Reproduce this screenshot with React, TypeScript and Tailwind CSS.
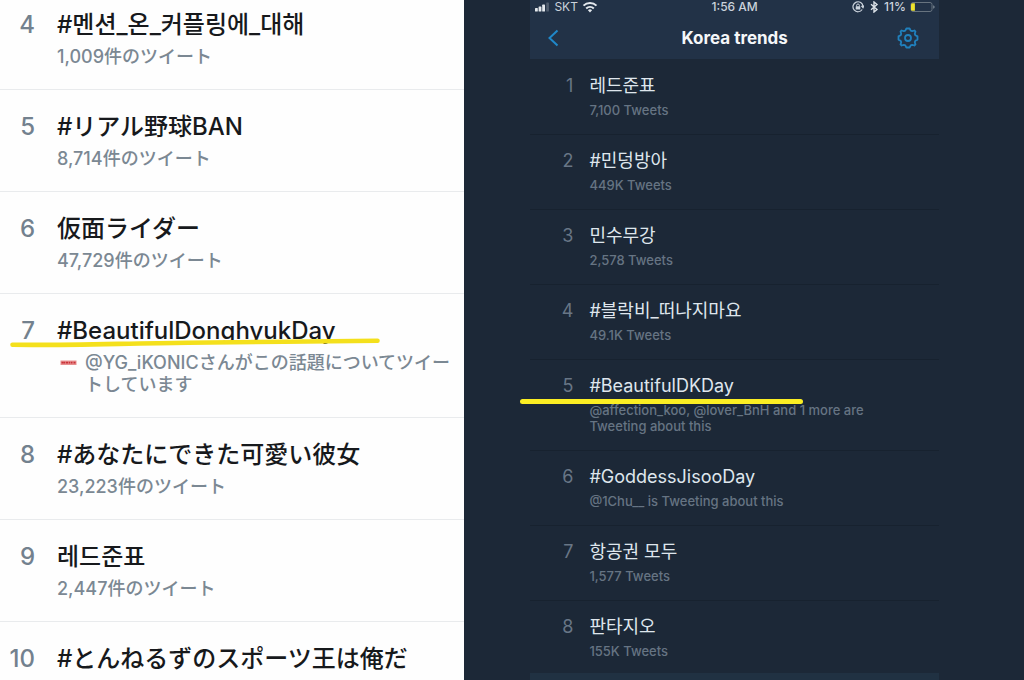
import type { ReactNode } from 'react';

type Trend = { rank: number; name: string; detail?: string; badge?: boolean; mark?: ReactNode };

const japanTrends: Trend[] = [
  { rank: 4, name: '#멘션_온_커플링에_대해', detail: '1,009件のツイート' },
  { rank: 5, name: '#リアル野球BAN', detail: '8,714件のツイート' },
  { rank: 6, name: '仮面ライダー', detail: '47,729件のツイート' },
  {
    rank: 7,
    name: '#BeautifulDonghyukDay',
    detail: '@YG_iKONICさんがこの話題についてツイートしています',
    badge: true,
    mark: (
      <svg className="absolute top-[43px] left-2 h-3 w-[374px]" viewBox="0 0 374 12" fill="none" aria-hidden="true">
        <path d="M4.500 7.800C60 8.500 110 6.500 180 5.700C250 5 300 4.500 369.500 3.700" stroke="#f4e01c" strokeWidth="4.600" strokeLinecap="round" />
      </svg>
    ),
  },
  { rank: 8, name: '#あなたにできた可愛い彼女', detail: '23,223件のツイート' },
  { rank: 9, name: '레드준표', detail: '2,447件のツイート' },
  { rank: 10, name: '#とんねるずのスポーツ王は俺だ' },
];

const koreaTrends: Trend[] = [
  { rank: 1, name: '레드준표', detail: '7,100 Tweets' },
  { rank: 2, name: '#민덩방아', detail: '449K Tweets' },
  { rank: 3, name: '민수무강', detail: '2,578 Tweets' },
  { rank: 4, name: '#블락비_떠나지마요', detail: '49.1K Tweets' },
  {
    rank: 5,
    name: '#BeautifulDKDay',
    detail: '@affection_koo, @lover_BnH and 1 more are Tweeting about this',
    mark: <span className="absolute top-[39px] -left-2.5 h-[5px] w-[283px] rounded-full bg-[#fbee23]" />,
  },
  { rank: 6, name: '#GoddessJisooDay', detail: '@1Chu__ is Tweeting about this' },
  { rank: 7, name: '항공권 모두', detail: '1,577 Tweets' },
  { rank: 8, name: '판타지오', detail: '155K Tweets' },
];

function JapanRow({ trend }: { trend: Trend }) {
  return (
    <li className="relative flex border-b border-[#e9ebed] pt-[21px] pb-[21px] first:pt-[9px] last:border-b-0 last:pb-0">
      <span className="w-[35px] shrink-0 text-right text-2xl leading-8 font-medium text-[#73818e]">{trend.rank}</span>
      <div className="ml-[22px] min-w-0 flex-1 pr-2">
        <h2 className="text-2xl leading-8 font-medium whitespace-nowrap text-[#17191c]">{trend.name}</h2>
        {trend.detail && (
          <div className="flex pt-[5px] text-lg leading-[22px] font-medium text-[#7b8893]">
            {trend.badge && (
              <svg className="mt-2 mr-2 ml-[3px] h-1.5 w-[17px] shrink-0" viewBox="0 0 16 6" aria-hidden="true">
                <rect y="0.500" width="16" height="4.500" fill="#e79090" />
                <path d="M1 2.700h2M4 1.800v1.800M5.500 2.700h2M9 1.800v1.800M10.500 2.700h1.500M13 2.700h2" stroke="#c93239" strokeWidth="1.700" />
              </svg>
            )}
            <p>{trend.detail}</p>
          </div>
        )}
      </div>
      {trend.mark}
    </li>
  );
}

function KoreaRow({ trend }: { trend: Trend }) {
  return (
    <li className="relative flex border-b border-[#17222f] pt-3.5 pb-4 last:border-b-0 last:pb-3.5">
      <span className="w-[43px] shrink-0 text-right text-lg leading-6 text-[#687686]">{trend.rank}</span>
      <div className="ml-4 min-w-0 flex-1 pr-14">
        <h2 className="text-lg leading-6 text-[#dfe6ed]">{trend.name}</h2>
        <p className="pt-1 text-[13px] leading-4 font-medium text-[#667483]">{trend.detail}</p>
      </div>
      {trend.mark}
    </li>
  );
}

function StatusBar() {
  return (
    <div className="grid h-[14px] grid-cols-3 items-center px-1 text-[12px] leading-[14px] text-[#cbd3dc]">
      <div className="flex items-center gap-1">
        <svg className="h-2.5 w-4" viewBox="0 0 16 10" fill="#e3e8ed" aria-hidden="true">
          <rect x="1" y="6" width="2.800" height="3.500" rx=".6" />
          <rect x="4.600" y="4.500" width="2.800" height="5" rx=".6" />
          <rect x="8.200" y="2.600" width="2.800" height="6.900" rx=".6" />
          <rect x="12.300" y="0.500" width="2.600" height="9" rx=".6" opacity=".25" />
        </svg>
        <span>SKT</span>
        <svg className="h-3 w-4" viewBox="0 0 16 12" fill="none" stroke="#e3e8ed" strokeWidth="2" aria-hidden="true">
          <path d="M1.500 4.600a9.300 9.300 0 0 1 13 0M4.200 7.500a5.500 5.500 0 0 1 7.600 0" />
          <path d="M8 11.500L5.900 9.300a3 3 0 0 1 4.200 0Z" fill="#e3e8ed" stroke="none" />
        </svg>
      </div>
      <span className="text-center font-medium">1:56 AM</span>
      <div className="flex items-center justify-end gap-1">
        <svg className="h-3 w-3" viewBox="0 0 12 12" fill="none" stroke="#cbd3dc" strokeWidth="1.200" aria-hidden="true">
          <path d="M10.200 8.500A5 5 0 1 1 11 5.500M9.400 4.800L11 6.600l1-2" />
          <rect x="3.700" y="5.300" width="4.600" height="3.300" rx=".5" fill="#cbd3dc" stroke="none" />
          <path d="M4.600 5.500V4.400a1.400 1.400 0 0 1 2.800 0v1.100" strokeWidth="1" />
        </svg>
        <svg className="h-3 w-3" viewBox="0 0 12 12" fill="none" stroke="#dce2e8" strokeWidth="1.400" aria-hidden="true">
          <path d="M3 3.300L9 8.500L6 11V1L9 3.500L3 8.700" />
        </svg>
        <span className="font-medium">11%</span>
        <svg className="h-3 w-[25px]" viewBox="0 0 25 12" aria-hidden="true">
          <rect x="1" y="1.500" width="21" height="9" rx="2" fill="none" stroke="#67737f" />
          <path d="M23.300 4.200c1.700.6 1.700 3 0 3.600z" fill="#8d98a3" />
          <path d="M2.200 2.200h2.700v7.600H2.200q-1.200 0-1.200-1.500V3.700q0-1.500 1.200-1.500Z" fill="#eee32c" />
        </svg>
      </div>
    </div>
  );
}

export default function App() {
  return (
    <main className="flex h-screen overflow-hidden bg-[#1c2837] font-['Inter','Noto_Sans_CJK_JP','Noto_Sans_CJK_KR',sans-serif]">
      <section aria-label="日本のトレンド" className="w-[45.35%] shrink-0 overflow-hidden bg-[#fefefe]">
        <ol>
          {japanTrends.map((t) => (
            <JapanRow key={t.rank} trend={t} />
          ))}
        </ol>
      </section>
      <section aria-label="Korea trends" className="flex min-w-0 flex-1 flex-col pr-[85px] pl-[66px]">
        <header className="shrink-0 bg-[#223247] pb-0.5">
          <StatusBar />
          <div className="grid h-[43px] grid-cols-3 items-center pt-[5px]">
            <button type="button" aria-label="Back" className="ml-[17px] w-3 text-[#2088c9]">
              <svg className="h-[18px] w-3" viewBox="0 0 12 18" fill="none" stroke="currentColor" strokeWidth="2" aria-hidden="true">
                <path d="M10.500 1.500L2.500 9l8 7.500" />
              </svg>
            </button>
            <h1 className="text-center text-[17px] leading-6 font-bold whitespace-nowrap text-[#f5f7f9]">Korea trends</h1>
            <button type="button" aria-label="Settings" className="mr-5 justify-self-end text-[#2080bd]">
              <svg className="h-[22px] w-[22px]" viewBox="-11 -11 22 22" fill="none" stroke="currentColor" strokeWidth="1.800" strokeLinejoin="round" aria-hidden="true">
                <path d="M-1.600-9.500H1.600L2.700-7.400L4.200-6.800L6.400-7.500L7.500-6.400L6.800-4.200L7.400-2.700L9.500-1.600V1.600L7.400 2.700L6.800 4.200L7.500 6.400L6.400 7.500L4.200 6.800L2.700 7.400L1.600 9.500H-1.600L-2.700 7.400L-4.200 6.800L-6.400 7.500L-7.500 6.400L-6.800 4.200L-7.400 2.700L-9.500 1.600V-1.600L-7.400-2.700L-6.800-4.200L-7.500-6.400L-6.400-7.500L-4.200-6.800L-2.700-7.400Z" />
                <circle r="3" />
              </svg>
            </button>
          </div>
        </header>
        <ol className="shrink-0 pt-px">
          {koreaTrends.map((t) => (
            <KoreaRow key={t.rank} trend={t} />
          ))}
        </ol>
        <div className="flex-1 bg-[#203142]" />
      </section>
    </main>
  );
}
